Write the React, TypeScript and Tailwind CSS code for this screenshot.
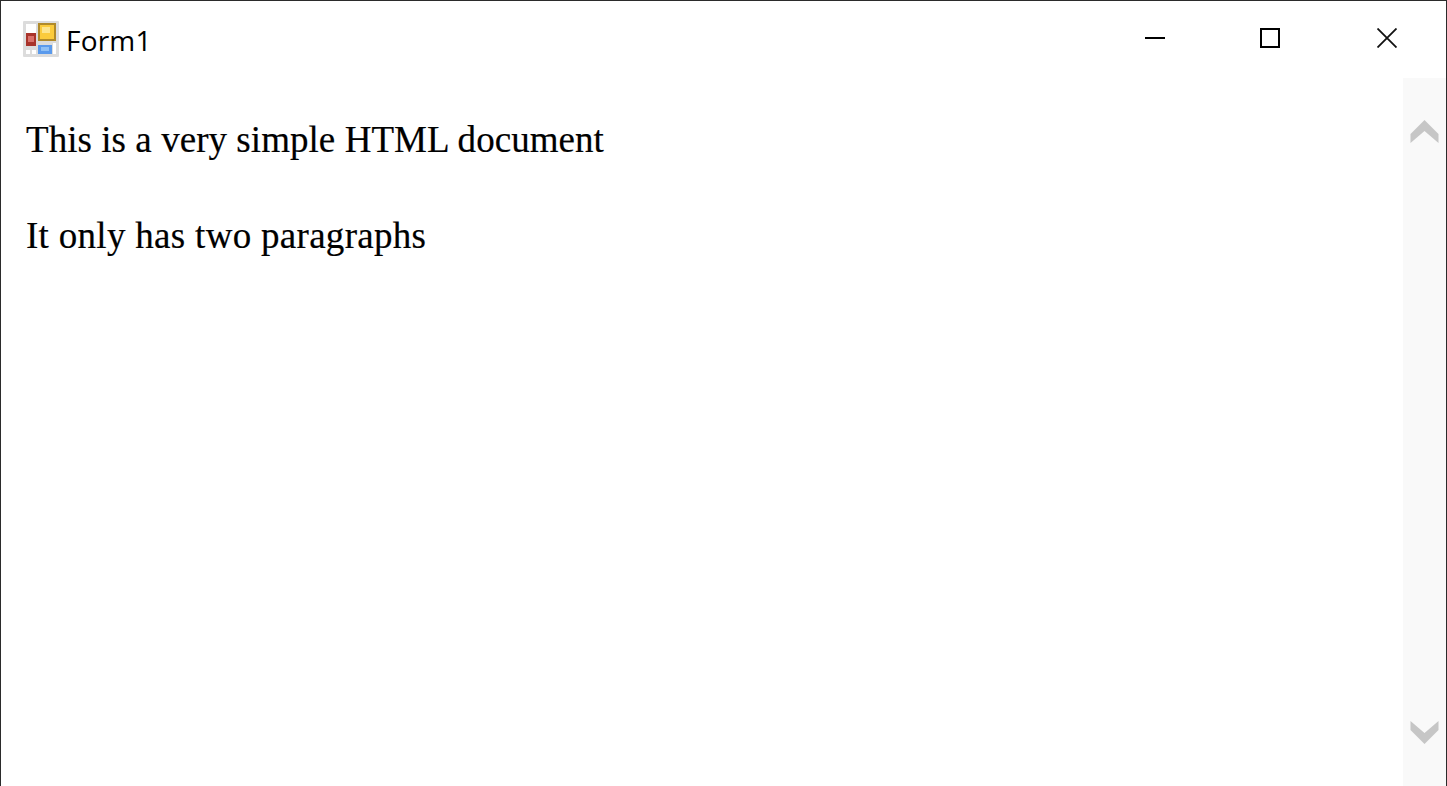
export default function App() {
  return (
    <div className="flex h-[786px] w-[1447px] flex-col overflow-hidden border-x border-t border-[#2b2b2b] bg-white">
      {/* Title bar */}
      <div className="flex h-[77px] shrink-0 items-start justify-between">
        <div className="ml-[22px] mt-[20px] flex items-start gap-[7px]">
          <FormIcon />
          <span className="font-['Open_Sans',sans-serif] text-[28px] leading-[38px] tracking-[0.2px] text-black">Form1</span>
        </div>
        <div className="mr-px flex">
          <button className="flex h-[76px] w-[116px] items-center justify-center pb-[2px]">
            <svg width="20" height="20" viewBox="0 0 20 20"><path d="M0 10h20" stroke="#000" strokeWidth="2" /></svg>
          </button>
          <button className="flex h-[76px] w-[116px] items-center justify-center pb-[2px] pr-[2px]">
            <svg width="20" height="20" viewBox="0 0 20 20"><rect x="1" y="1" width="18" height="18" fill="none" stroke="#000" strokeWidth="2" /></svg>
          </button>
          <button className="flex h-[76px] w-[116px] items-center justify-center pb-[2px]">
            <svg width="20" height="20" viewBox="0 0 20 20"><path d="M.5 .5l19 19M19.500 .5l-19 19" stroke="#111" strokeWidth="1.800" /></svg>
          </button>
        </div>
      </div>

      {/* Browser content */}
      <div className="flex min-h-0 flex-1">
        <div className="flex-1 pl-[25px] pt-[38px] font-['Liberation_Serif',serif] text-[37px] leading-[48px] text-black [-webkit-text-stroke:0.2px_#000]">
          <p className="mb-[48px] tracking-[0.05px]">This is a very simple HTML document</p>
          <p className="tracking-[0.3px]">It only has two paragraphs</p>
        </div>
        <div className="flex w-[43px] shrink-0 flex-col items-center justify-between bg-[#f9f9f9] pb-[42px] pt-[42px]">
          <svg className="blur-[0.7px]" width="30" height="24" viewBox="0 0 30 24"><path d="M14.500 0L28.500 14V23L14.500 11L.5 23V14Z" fill="#c6c6c6" /></svg>
          <svg className="blur-[0.7px]" width="30" height="24" viewBox="0 0 30 24"><path d="M14.500 24L28.500 10V1L14.500 13L.5 1V10Z" fill="#c6c6c6" /></svg>
        </div>
      </div>
    </div>
  );
}

function FormIcon() {
  return (
    <svg className="blur-[0.5px]" width="36" height="36" viewBox="0 0 36 36">
      <rect x="0" y="0" width="36" height="36" rx="1" fill="#dcdcdc" />
      <rect x="3" y="3" width="10" height="9" fill="#fff" />
      <rect x="3" y="12" width="10" height="13" fill="#a9342b" />
      <rect x="5" y="15" width="6" height="6" fill="#d9716a" />
      <rect x="15" y="2" width="18" height="18" fill="#b08a2a" />
      <rect x="17" y="4" width="14" height="14" fill="#fbcb3c" />
      <rect x="19" y="6" width="8" height="6" fill="#fde58d" />
      <rect x="15" y="24" width="14" height="9" fill="#5a9aec" />
      <rect x="18" y="26" width="8" height="4" fill="#8fc0f5" />
      <rect x="3" y="29" width="4" height="4" fill="#fff" />
      <rect x="9" y="29" width="4" height="4" fill="#fff" />
      <rect x="30" y="22" width="3" height="11" fill="#fff" />
    </svg>
  );
}
